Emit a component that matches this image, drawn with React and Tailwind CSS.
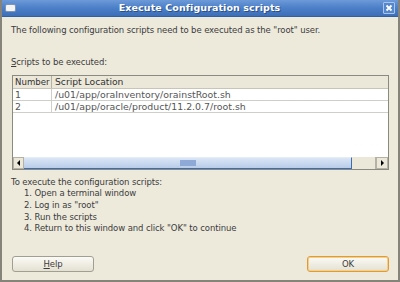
import React from "react";

const font = { fontFamily: '"DejaVu Sans", Verdana, sans-serif' };

const rows = [
  ["1", "/u01/app/oraInventory/orainstRoot.sh"],
  ["2", "/u01/app/oracle/product/11.2.0.7/root.sh"],
];

const steps = [
  "Open a terminal window",
  'Log in as "root"',
  "Run the scripts",
  'Return to this window and click "OK" to continue',
];

const App = () => {
  return (
    <div
      className="w-[400px] h-[282px] flex flex-col bg-[#edeadc] border-x-2 border-b-2 border-[#85837a] text-[8.5px] tracking-[-0.1px] text-[#3c3c3c] overflow-hidden"
      style={font}
    >
      {/* title bar */}
      <div className="h-[17px] shrink-0 flex items-center justify-between -mx-[2px] px-[5px] bg-gradient-to-b from-[#6d9ad8] via-[#4b7fc7] to-[#3d6fb8] border-b border-[#30609f]">
        <div className="w-[11px] h-[8px] rounded-[2px] bg-[#f4f4f4] border border-[#7f95b8]" />
        <div className="text-white font-bold text-[9.5px] tracking-[0.1px] [text-shadow:1px_1px_0_#2a4f85]">
          Execute Configuration scripts
        </div>
        <div className="w-[12px] h-[12px] border border-[#a9c4ea] rounded-[1px] bg-[#5587cd] flex items-center justify-center">
          <svg width="8" height="8" viewBox="0 0 8 8">
            <path d="M1.5 1.5 L6.5 6.5 M6.5 1.5 L1.5 6.5" stroke="white" strokeWidth="1.8" />
          </svg>
        </div>
      </div>

      <div className="flex-1 flex flex-col px-[9px]">
        <p className="mt-[7px] leading-[12px]">
          The following configuration scripts need to be executed as the "root" user.
        </p>
        <p className="mt-[20px] leading-[12px]">
          <span className="underline">S</span>cripts to be executed:
        </p>

        {/* table */}
        <div className="mt-[7px] ml-[1px] w-[377px] h-[95px] flex flex-col bg-white border border-[#8a8a80] text-[9.4px] tracking-normal">
          <div className="flex h-[13px] bg-[#ebe8da] border-b border-[#c8c5b8] leading-[12px] text-[#333] text-[8.6px]">
            <div className="w-[39px] pl-[2px] border-r border-[#b5b2a5] overflow-hidden">Number</div>
            <div className="flex-1 pl-[3px] text-[9.2px]">Script Location</div>
          </div>
          {rows.map((r) => (
            <div key={r[0]} className="flex h-[12px] border-b border-[#cfcfc8] leading-[11px] text-[#555]">
              <div className="w-[39px] pl-[2px] border-r border-[#cfcfc8]">{r[0]}</div>
              <div className="flex-1 pl-[3px]">{r[1]}</div>
            </div>
          ))}
          <div className="flex-1" />
          {/* horizontal scrollbar */}
          <div className="flex h-[12px] bg-[#ebe8da]">
            <div className="w-[11px] border border-[#b5b2a5] flex items-center justify-center">
              <div className="w-0 h-0 border-y-[3px] border-y-transparent border-r-[3px] border-r-black" />
            </div>
            <div className="w-[328px] border-t border-t-[#e4ecf8] border-b border-b-[#3d6cb5] border-r border-r-[#3d6cb5] bg-gradient-to-b from-[#dbe6f5] to-[#b8cde9] flex items-center justify-center">
              <div className="w-[16px] h-[6px] bg-[radial-gradient(#8aa6d4_0.7px,transparent_0.8px)] [background-size:2px_2px]" />
            </div>
            <div className="flex-1 border-r border-[#b5b2a5]" />
            <div className="w-[12px] border border-[#b5b2a5] flex items-center justify-center">
              <div className="w-0 h-0 border-y-[3px] border-y-transparent border-l-[3px] border-l-black" />
            </div>
          </div>
        </div>

        <p className="mt-[6px] leading-[12px]">To execute the configuration scripts:</p>
        <div className="leading-[11.75px] pl-[13px]">
          {steps.map((s, i) => (
            <p key={i}>
              {i + 1}.&nbsp;{s}
            </p>
          ))}
        </div>

        <div className="mt-auto mb-[8px] flex justify-between">
          <button className="w-[82px] h-[16px] ml-[1px] rounded-[3px] border border-[#a19e92] bg-gradient-to-b from-[#fbfaf6] to-[#e4e1d2] text-[8.5px] leading-[14px] text-[#3c3c3c]">
            <span className="underline">H</span>elp
          </button>
          <button className="w-[82px] h-[16px] rounded-[3px] border border-[#e09a38] ring-1 ring-inset ring-[#f6cf86] bg-gradient-to-b from-[#fbfaf6] to-[#e4e1d2] text-[8.5px] leading-[14px] text-[#3c3c3c]">
            OK
          </button>
        </div>
      </div>
    </div>
  );
};

export default App;
